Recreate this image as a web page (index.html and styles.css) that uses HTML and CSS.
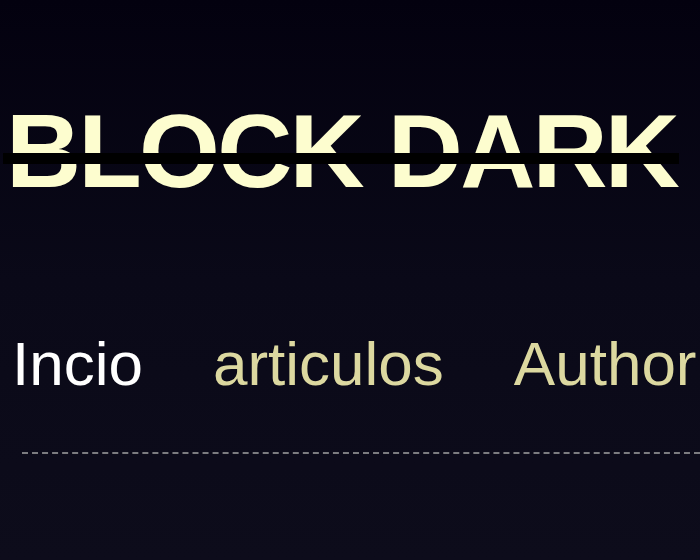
FILE: index.html
```html
<!DOCTYPE html>
<html lang="es">
<head>
<meta charset="utf-8">
<title>Block Dark</title>
<link rel="stylesheet" href="styles.css">
</head>
<body>
<header class="site-header">
  <h1 class="brand">BLOCK DARK</h1>
  <nav class="menu">
    <a class="menu-link is-active" href="#">Incio</a>
    <a class="menu-link" href="#">articulos</a>
    <a class="menu-link" href="#">Author</a>
  </nav>
  <div class="divider"></div>
</header>
</body>
</html>
```
FILE: styles.css
```css
html, body {
  margin: 0;
  padding: 0;
  overflow: hidden;
}
body {
  min-height: 100vh;
  background: linear-gradient(180deg, #03010f 0%, #0a0918 50%, #0d0c1b 100%);
  font-family: "Liberation Sans", Arial, sans-serif;
}
.site-header {
  padding: 99px 0 0 0;
}
.brand {
  position: relative;
  display: inline-block;
  margin: 0 0 0 6px;
  font-size: 104px;
  line-height: 1;
  font-weight: 700;
  letter-spacing: -2.8px;
  color: #fdfdcf;
  white-space: nowrap;
}
.brand::after {
  content: "";
  position: absolute;
  left: -3px;
  right: -2px;
  top: 54px;
  height: 11px;
  background: #000;
}
.menu {
  display: flex;
  gap: 70px;
  margin-top: 130px;
  padding-left: 12px;
  white-space: nowrap;
}
.menu-link {
  font-size: 62px;
  line-height: 1;
  color: #dcd8a0;
  text-decoration: none;
}
.menu-link.is-active {
  color: #ffffff;
}
.divider {
  margin: 57px 0 0 22px;
  border-top: 2px dashed #7c7c80;
}
```
